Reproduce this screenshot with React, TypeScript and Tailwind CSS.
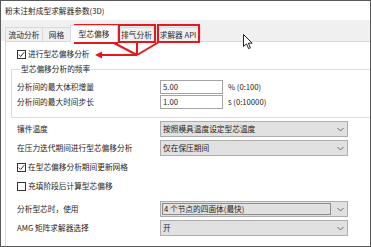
import React from "react";

const Chevron = () => (
    <svg width="7" height="5" viewBox="0 0 7 5" className="shrink-0">
        <path d="M0.5 1 L3.5 4 L6.5 1" fill="none" stroke="#6a6a6a" strokeWidth="1" />
    </svg>
);

function CheckBox({ checked }: { checked?: boolean }) {
    return (
        <span className="w-[9px] h-[9px] border border-[#333333] bg-white flex items-center justify-center shrink-0">
            {checked && (
                <svg width="7" height="7" viewBox="0 0 7 7">
                    <path d="M0.8 3.6 L2.7 5.5 L6.2 1.2" fill="none" stroke="#333333" strokeWidth="1" />
                </svg>
            )}
        </span>
    );
}

function Select({ value, focused }: { value: string; focused?: boolean }) {
    return (
        <div className="w-[188px] h-[16px] bg-[#e1e1e1] border border-[#adadad] flex items-center">
            {focused ? (
                <div className="flex-1 h-full flex items-center">
                    <div className="flex-1 h-[12px] ml-[1px] mr-[3px] border border-[#8c8c8c] flex items-center pl-[1px]">
                        {value}
                    </div>
                </div>
            ) : (
                <div className="flex-1 pl-[2px]">{value}</div>
            )}
            <div className="w-[13px] flex items-center justify-center">
                <Chevron />
            </div>
        </div>
    );
}

function NumberRow({ label, value, unit }: { label: string; value: string; unit: string }) {
    return (
        <div className="flex items-center h-[14px]">
            <div className="w-[143px]">{label}</div>
            <div className="w-[63px] h-[14px] border border-[#a5a5a5] bg-white flex items-center pl-[2px]">{value}</div>
            <div className="ml-[5px]">{unit}</div>
        </div>
    );
}

function SelectRow({ label, value, focused }: { label: string; value: string; focused?: boolean }) {
    return (
        <div className="flex items-center ml-[11px]">
            <div className="w-[143px]">{label}</div>
            <Select value={value} focused={focused} />
        </div>
    );
}

function CheckRow({ label, checked }: { label: string; checked?: boolean }) {
    return (
        <div className="flex items-center h-[10px] ml-[11px] gap-[2px]">
            <CheckBox checked={checked} />
            <span>{label}</span>
        </div>
    );
}

const tabs = [
    { name: "流动分析", w: "w-[38px]" },
    { name: "网格", w: "w-[29px]" },
    { name: "型芯偏移", w: "w-[48px]", active: true },
    { name: "排气分析", w: "w-[39px]" },
    { name: "求解器 API", w: "w-[46px]" },
];

export default function App() {
    return (
        <div className="relative w-[371px] h-[247px] overflow-hidden bg-white border border-[#595959] text-[7.7px] leading-none text-[#242424] font-['Noto_Sans_CJK_SC','Noto_Sans',sans-serif]">
            <div className="h-[19px] flex items-center pl-[4px]">粉末注射成型求解器参数(3D)</div>

            <div className="h-[21px] bg-[#f0f0f0] flex items-end pl-[4px]">
                {tabs.map((t, i) =>
                    t.active ? (
                        <div
                            key={t.name}
                            className={`${t.w} h-[17px] -mb-px -ml-px relative z-10 bg-white border border-b-0 border-[#d9d9d9] flex items-center justify-center`}
                        >
                            {t.name}
                        </div>
                    ) : (
                        <div
                            key={t.name}
                            className={`${t.w} h-[14px] ${i > 0 ? "-ml-px" : ""} bg-[#f0f0f0] border border-b-0 border-[#d9d9d9] flex items-center justify-center text-[#2a2a2a]`}
                        >
                            {t.name}
                        </div>
                    )
                )}
            </div>

            <div className="ml-[4px] border-t border-l border-[#d9d9d9] h-[210px] flex flex-col">
                <div className="mt-[7px]">
                    <CheckRow label="进行型芯偏移分析" checked />
                </div>

                <fieldset className="mt-[6px] ml-[5px] w-[370px] border border-[#dcdcdc] pl-[5px] pb-[8px]">
                    <legend className="ml-[3px] px-[1px] h-[8px]">型芯偏移分析的频率</legend>
                    <div className="mt-[7px] flex flex-col gap-[1px]">
                        <NumberRow label="分析间的最大体积增量" value="5.00" unit="% (0:100)" />
                        <NumberRow label="分析间的最大时间步长" value="1.00" unit="s (0:10000)" />
                    </div>
                </fieldset>

                <div className="mt-[3px] flex flex-col gap-[3px]">
                    <SelectRow label="镶件温度" value="按照模具温度设定型芯温度" />
                    <SelectRow label="在压力迭代期间进行型芯偏移分析" value="仅在保压期间" />
                </div>

                <div className="mt-[6px]">
                    <CheckRow label="在型芯偏移分析期间更新网格" checked />
                </div>
                <div className="mt-[9px]">
                    <CheckRow label="充填阶段后计算型芯偏移" />
                </div>

                <div className="mt-[10px] flex flex-col gap-[3px]">
                    <SelectRow label="分析型芯时，使用" value="4 个节点的四面体(最快)" focused />
                    <SelectRow label="AMG 矩阵求解器选择" value="开" />
                </div>
            </div>

            {/* annotation overlay */}
            <svg className="absolute left-0 top-0 pointer-events-none" width="371" height="247" viewBox="0 0 371 247">
                <g fill="none" stroke="#e3191f" strokeWidth="2">
                    <rect x="74" y="24" width="42" height="18" />
                    <rect x="118" y="24" width="36" height="17" />
                    <rect x="157" y="24" width="41" height="17" />
                    <path d="M113 42 L136 54" />
                    <path d="M136 41 L136 54" />
                    <path d="M158 41 L136 54" />
                    <path d="M136 54 L100 54" />
                </g>
                <polygon points="94,54 101,50.5 101,57.5" fill="#e3191f" />
            </svg>

            {/* mouse pointer */}
            <svg className="absolute left-[242px] top-[33px] pointer-events-none" width="11" height="16" viewBox="0 0 11 16">
                <path
                    d="M0.5 0.5 L0.5 12.5 L3.5 9.8 L5.6 14.6 L7.4 13.8 L5.4 9.2 L9.2 9.2 Z"
                    fill="white"
                    stroke="#222222"
                    strokeWidth="1"
                    strokeLinejoin="round"
                />
            </svg>
        </div>
    );
}
